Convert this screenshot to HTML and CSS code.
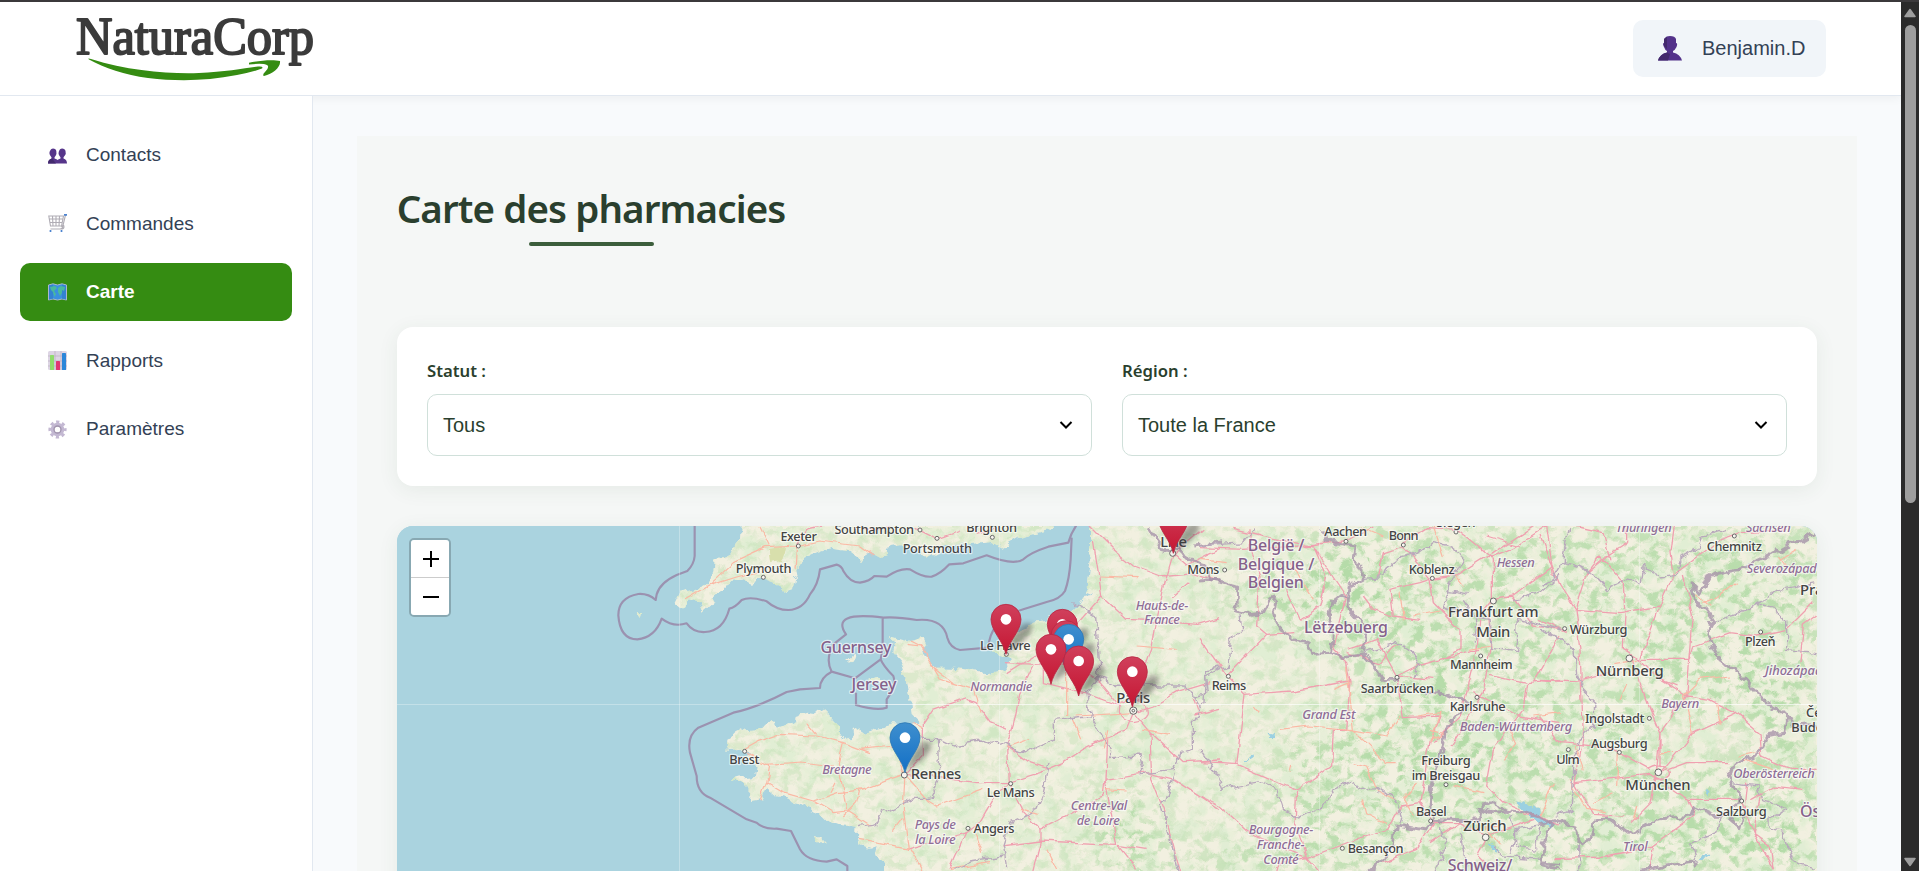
FILE: index.html
```html
<!DOCTYPE html>
<html lang="fr">
<head>
<meta charset="utf-8">
<title>NaturaCorp - Carte des pharmacies</title>
<link rel="stylesheet" href="styles.css">
</head>
<body>
<div class="window">
  <div class="app">
    <header class="header">
      <svg class="logo" viewBox="0 0 240 66" aria-label="NaturaCorp">
        <text class="logo-text" x="1" y="38" textLength="238" lengthAdjust="spacingAndGlyphs">NaturaCorp</text>
        <path transform="translate(2 0)" fill="#358c12" d="M12 43.500Q10 42 14 43C52 55 92 58 122 57C148 56 168 52 181 50.500Q187 50 185 52.500Q176 56 160 59C129 65 101 65.500 71 62C48 59 27 52 12 43.500ZM172 46.800C182 44.500 196 43.500 203 45C204 51 196 58 187 60Q185 59 188 56Q193 51 190 49Q186 47 172 48.500Z"/>
      </svg>
      <div class="user">
        <svg class="user-icon" viewBox="0 0 24 25"><path d="M7 2Q8 0 12 0Q17 0 18 3V7Q20 7 18.500 11Q17 14 15 15V16.500Q22 18 24 24.500H0Q2 18 9 16.500V15Q7 14 6 11Q4 7 6 7V3Z" fill="#53328a"/><path d="M0 24.500Q2 18 9 16.500L12 18L10 24.500ZM6 3L9 1V13L6 10Z" fill="#43296c"/></svg>
        <span>Benjamin.D</span>
      </div>
    </header>
    <div class="body">
      <nav class="sidebar">
        <a class="nav"><svg viewBox="0 0 19 19"><g fill="#56358a"><path d="M2.500 4Q3 2.500 5 2.500Q8 2.500 8.300 5Q9 8 7.500 10Q5 13 2.500 10Q1 8 1.500 6ZM11.500 4Q12 2.500 14 2.500Q17 2.500 17.500 5Q18.500 8 16.500 10Q14 13 11.500 10Q10 8 10.700 6Z"/><path d="M0 17.500Q0 13.500 3.500 12.500V10H6.500V12.500Q9 13 9.500 14Q10.500 13 12.500 12.500V10H15.500V12.500Q19 13.500 19 17.500Z"/></g><path d="M0 17.500Q0 13.500 4 12.500L8 17.500Z" fill="#432a6e"/></svg><span>Contacts</span></a>
        <a class="nav"><svg viewBox="0 0 19 19" fill="none"><path d="M.8 2H15.500L13.500 12H2.500ZM1 5H15M1.500 8.500H14.500M4.500 2L5 12M8 2V12M11.500 2L11 12M17.500 1L14.500 13.500Q14 15 12 15H2.500M13.500 13Q16 9.500 16 13Q16 15 13 15" stroke="#b0adb5" stroke-width="1.100"/><path d="M16 .8H19M2.500 16V18M13.500 16V18" stroke="#4c83cf" stroke-width="1.700"/></svg><span>Commandes</span></a>
        <a class="nav active"><svg viewBox="0 0 19 19"><path d="M.5 2L5 .8L9.500 2L14 .8L18.500 2V17L14 16L9.500 17L5 16L.5 17Z" fill="#3a90df" stroke="#a9b7cd"/><path d="M14 1.500V16L18 16.500V2.500ZM5 1.500V16L1 16.500V2.500Z" fill="#2f7bc9" opacity=".65"/><path d="M2 4L7 3L9 5L6 8L8 11L6.500 14L5 9L3 7ZM10 5L13 3L17 4L16 8L14 7V10L12 13L10 9Z" fill="#49b99d"/></svg><span>Carte</span></a>
        <a class="nav"><svg viewBox="0 0 19 19"><rect width="19" height="19" rx="1.500" fill="#ddd5e4"/><path d="M0 5H19M0 10H19M0 15H19M7 0V19M13 0V19" stroke="#b9afc0" stroke-width=".7"/><rect x="2" y="4" width="4" height="15" rx=".6" fill="#8fdc6b"/><rect x="8" y="10" width="4" height="9" rx=".6" fill="#e23472"/><rect x="14" y="2" width="4" height="17" rx=".6" fill="#2b86d9"/></svg><span>Rapports</span></a>
        <a class="nav"><svg viewBox="0 0 19 19" fill="none"><circle cx="9.500" cy="9.500" r="7.600" stroke="#c3b8d2" stroke-width="3" stroke-dasharray="3.200 2.770" stroke-dashoffset="1.600"/><circle cx="9.500" cy="9.500" r="4.900" stroke="#c3b8d2" stroke-width="3.800"/><circle cx="9.500" cy="9.500" r="3.500" stroke="#a194ad" stroke-width="1.300"/></svg><span>Paramètres</span></a>
      </nav>
      <main class="content">
        <section class="panel">
          <div class="title-wrap"><h1>Carte des pharmacies</h1><div class="title-line"></div></div>
          <div class="filters">
            <div class="field"><label>Statut :</label><div class="select"><span>Tous</span><svg viewBox="0 0 14 8"><path d="M1.500 1L7 6.500L12.500 1"/></svg></div></div>
            <div class="field"><label>Région :</label><div class="select"><span>Toute la France</span><svg viewBox="0 0 14 8"><path d="M1.500 1L7 6.500L12.500 1"/></svg></div></div>
          </div>
          <div class="map">
            <svg class="map-canvas" viewBox="397 525 1420 346">
              <defs>
                <clipPath id="land">
                  <path transform="translate(390 515) scale(.33333)" d="M1052 20L1050 70L1020 115L975 140L965 185L930 215L870 230L855 262L865 272L885 266L895 250L930 262L940 290L962 270L975 240L1000 222L1020 195L1060 190L1085 200L1120 190L1160 205L1190 225L1206 220L1212 190L1228 180L1225 155L1240 120L1290 100L1330 92L1370 100L1404 125L1412 142L1420 120L1445 112L1470 125L1495 120L1490 95L1530 88L1580 95L1610 128L1640 110L1660 88L1740 85L1810 78L1840 95L1890 65L1970 45L2005 20Z"/>
                  <path transform="translate(860 515) scale(.33333)" d="M690 20V70L692 130L682 190L680 225L706 236L670 240L650 270L610 290L560 315L520 320L460 350L430 375L395 405L420 420L455 430L430 460L380 472L330 462L280 455L225 455L200 430L190 400L205 385L195 365L150 375L90 360L105 385L100 410L125 440L140 490L150 540L155 600L180 625L150 630L100 625L40 640L20 655L-5 638L-40 675L-60 650L-80 610L-110 580L-130 595L-160 590L-190 600L-192 615L-240 635L-265 612L-290 635L-350 640L-395 665L-398 705L-350 700L-325 715L-360 725L-310 750L-315 780L-360 785L-388 793L-350 805L-325 830L-328 855L-295 850L-280 815L-250 840L-210 850L-160 880L-120 895L-100 915L-70 925L-10 935L-12 960L0 985L30 995L50 990L45 1020L75 1040V1090H2900V20Z"/>
                  <path transform="translate(390 515) scale(.33333)" d="M1375 430L1388 418L1402 414L1396 432L1382 437ZM1272 960L1290 965L1305 982L1278 982ZM1435 488L1468 482L1484 495L1465 507L1440 500ZM746 294L760 294L756 306Z"/>
                </clipPath>
                <filter id="woods" x="0" y="0" width="100%" height="100%" color-interpolation-filters="sRGB">
                  <feTurbulence type="fractalNoise" baseFrequency=".085 .1" numOctaves="4" seed="11" result="n"/>
                  <feColorMatrix in="n" values="0 0 0 0 .7  0 0 0 0 .855  0 0 0 0 .65  4.500 0 0 0 -2.050"/>
                  <feGaussianBlur stdDeviation=".5"/>
                </filter>
                <filter id="fields" x="0" y="0" width="100%" height="100%" color-interpolation-filters="sRGB">
                  <feTurbulence type="fractalNoise" baseFrequency=".05" numOctaves="4" seed="4"/>
                  <feColorMatrix values="0 0 0 0 .86  0 0 0 0 .93  0 0 0 0 .81  4 0 0 0 -1.700"/>
                </filter>
                <filter id="soft" x="-20%" y="-20%" width="140%" height="140%"><feGaussianBlur stdDeviation="16"/></filter>
                <filter id="rough" filterUnits="userSpaceOnUse" x="397" y="520" width="1420" height="355" color-interpolation-filters="sRGB">
                  <feTurbulence type="fractalNoise" baseFrequency=".09" numOctaves="3" seed="8"/>
                  <feDisplacementMap in="SourceGraphic" scale="10" xChannelSelector="R" yChannelSelector="G"/>
                </filter>
                <filter id="wavy" filterUnits="userSpaceOnUse" x="397" y="520" width="1420" height="355" color-interpolation-filters="sRGB">
                  <feTurbulence type="fractalNoise" baseFrequency=".06" numOctaves="2" seed="3"/>
                  <feDisplacementMap in="SourceGraphic" scale="7" xChannelSelector="R" yChannelSelector="G"/>
                </filter>
                <filter id="shade" x="-50%" y="-50%" width="200%" height="200%"><feGaussianBlur stdDeviation="8"/></filter>
                <mask id="density" maskUnits="userSpaceOnUse" x="397" y="525" width="1420" height="346">
                  <rect x="397" y="525" width="1420" height="346" fill="#555"/>
                  <g fill="#fff" filter="url(#soft)">
                    <path d="M1260 560L1330 530H1817V871H1120L1110 820L1200 860L1310 800L1260 790L1290 740L1380 690L1330 640L1220 610Z" opacity=".75"/>
                    <ellipse cx="1395" cy="755" rx="28" ry="50"/><ellipse cx="1470" cy="745" rx="25" ry="50"/><ellipse cx="1120" cy="825" rx="30" ry="35"/>
                    <path d="M1700 600L1800 710L1780 735L1700 650ZM1650 560L1750 550L1720 580ZM1500 830L1650 840L1817 800V871H1500Z"/>
                    <ellipse cx="1350" cy="600" rx="60" ry="45"/><ellipse cx="1450" cy="670" rx="35" ry="25"/>
                  </g>
                  <g fill="#333" filter="url(#soft)"><ellipse cx="1700" cy="740" rx="60" ry="18"/><ellipse cx="1590" cy="670" rx="25" ry="30"/></g>
                </mask>
                <linearGradient id="red" x2="0" y2="1"><stop stop-color="#d0405c"/><stop offset="1" stop-color="#c51632"/></linearGradient>
                <linearGradient id="blue" x2="0" y2="1"><stop stop-color="#3f8fce"/><stop offset="1" stop-color="#126fc6"/></linearGradient>
                <g id="shadow"><path d="M0 104L22 50Q50 0 76 14Q88 40 40 75Z" fill="#333" opacity=".42" filter="url(#shade)"/></g>
                <path id="pin" d="M0 105C-8 65-45 35-45 0A45 45 0 0 1 45 0C45 35 8 65 0 105Z"/>
              </defs>

              <rect x="397" y="525" width="1420" height="346" fill="#aad3df"/>
              <g filter="url(#rough)"><g clip-path="url(#land)">
                <rect x="380" y="515" width="1450" height="370" fill="#f2f0e0"/>
                <rect x="397" y="525" width="1420" height="346" filter="url(#fields)" opacity=".7"/>
                <g mask="url(#density)"><rect x="397" y="525" width="1420" height="346" filter="url(#woods)"/></g>
                <path d="M768 548L785 545L782 560L770 562Z" fill="#d8dfac"/>
                <path d="M1515 800L1530 803L1553 825L1538 823ZM1540 818L1555 822L1552 830ZM1706 790L1710 790L1709 795ZM1268 731L1275 733L1272 736ZM1245 759L1254 754L1250 757ZM1700 858L1710 854L1704 861ZM1488 843L1500 850L1496 851Z" fill="#9bd0e2" stroke="#9bd0e2"/>
              </g></g>

              <!-- Motorways -->
              <g class="road" filter="url(#wavy)">
                <g transform="translate(390 515) scale(.33333)">
                  <path class="trunk" d="M885 248L960 205L1040 180L1110 165M960 205L1030 140L1130 95L1220 90L1290 75L1410 90M1110 30L1140 90M1220 90L1215 160M1410 90L1450 120M1065 700L1100 680L1170 655L1280 660L1360 680L1440 710M1065 705L1130 745L1235 738L1330 750M1140 745L1130 800L1180 830L1270 855L1340 830L1430 820M1130 800L1110 850M1270 855L1330 890L1370 885L1440 930M1250 620L1280 655M1360 680L1345 740L1370 885M1410 820L1400 860L1360 900M1320 830L1335 800"/>
                  <path class="motor" d="M1225 85L1250 40L1290 30"/>
                </g>
                <g transform="translate(860 515) scale(.33333)">
                  <path class="motor" d="M0 35L50 45L90 30M170 40L230 70L300 45M350 55L400 40M700 75L715 170L725 240L800 310L890 315L1010 325L1080 305M725 240L610 370L520 420L440 470M440 440L520 445L640 440L720 500L780 570M690 30L760 100L820 150L900 180L1000 170L1060 190M940 115L915 200L890 310L875 400L840 500L820 570M940 115L1030 40M940 115L980 150L1080 100M940 240L985 200M820 590L880 570L950 530L1050 500M820 590L870 650L970 740L1080 735M820 590L800 640L730 670L670 700L610 740L540 770L440 800L350 800L240 785L135 775M740 670L735 790L730 840L540 940L490 890L445 800L440 690L460 630L480 530L520 445M440 640L390 620L345 560L320 550M135 775L190 715L190 625L220 580L320 545M445 690L510 740L570 760M445 800L400 850L360 920L320 950L270 1060M430 990L540 975L770 985L860 1000M540 940L540 980L515 1080M770 985L735 790L860 770L940 790L1080 880M870 650L875 790L910 880L965 1080M770 985L830 1060M1000 600L1080 580M780 560Q820 540 860 570Q880 610 820 620Q760 610 780 560M550 390L550 500L670 530L780 570M320 950L140 1000M1015 590L1000 545"/>
                  <path class="trunk" d="M140 385L180 390L240 490L340 520L360 590M180 390L150 375M220 455L280 500M0 825L90 790L135 775L100 690L0 700M135 775L130 880L145 1000L0 970M135 775L205 855L230 870L370 820M150 1000L190 1070M155 620L190 640M720 180L830 185M830 390L950 400M650 600L820 590M620 440L620 600M640 610L665 670M730 820L800 825M440 690L510 665M345 950L365 1010M390 1040L270 1060M480 880L530 895M560 1000L590 1060M100 950L130 910M850 640L930 655M740 640L730 700"/>
                </g>
                <g transform="translate(1200 515) scale(.33333)">
                  <path class="motor" d="M0 95L130 100L300 90L435 75L520 30M150 40V100L180 180L170 330L200 355L280 350M100 40L180 60L340 90L440 240M340 90L380 180L360 270L300 310L260 220M200 355L80 480L0 370M80 480L135 535L280 525L450 495L440 640L400 640L395 750L290 825L110 745L0 740M135 535L110 745M290 825L285 920L320 1025L450 975L560 940L600 870L660 860L690 680L720 600L610 605L590 480L650 450L720 430L840 400M0 840L60 870L160 960L320 1025L370 1080M450 495L440 440L400 400L440 240M440 400L530 370L590 480L700 490M590 380L540 440L440 410M490 240L520 280L580 300L660 310M580 300L570 220L660 200L690 190L700 260L780 340L780 400L730 430M535 180L550 110L610 90L690 190L770 180L880 110L1000 30M610 80L680 35L770 40L880 130L880 250L940 240L1060 150M880 250L840 300L830 410L800 530L780 600L700 680M860 300L870 400L850 530L750 690M870 475L980 500L1080 490M980 500L970 580L880 700L860 810L910 860L1080 930M820 530L960 600L1080 620M935 240L1000 330L1080 340M870 125L940 95L1040 30L1060 180M860 60L960 90M660 860L700 920L780 920L860 960L1000 910M700 920L650 1000L550 1040M860 960L830 1020L870 1060M1080 360L1040 430L1000 500M230 1080L240 1040L320 1025M780 920L690 980"/>
                  <path class="trunk" d="M440 450L460 640L560 740L590 740M240 640L330 630L450 640L560 660L600 600M460 740L500 750L530 820L590 850M160 570L175 590M270 770L275 750M400 520L450 500M490 850L500 890L560 920M640 300L720 285M650 600L720 590L690 680M690 640L740 650L690 670M0 130L80 140M270 140L340 250M600 230L610 310M750 160L790 210M700 30L730 120M810 400L870 390M1000 600L1080 590M920 620L950 680L910 730M860 940L900 990M760 810L850 830M830 940L900 930M480 30L550 60M640 900L610 850L650 800"/>
                </g>
                <g transform="translate(1540 515) scale(.33333)">
                  <path class="motor" d="M0 60L35 150L60 210L105 280L120 400L125 530L130 660L105 800L160 895L250 900M105 280L140 170L200 120L260 80M105 280L240 290L360 270L400 180L390 110L400 30M140 170L180 120L250 200L255 300L250 400L300 430L360 270M300 430L450 430L460 390L570 350L650 360L740 340L820 260M395 180L450 140L540 70M430 180L460 300L440 540L360 650L350 760L330 860L270 920M270 410L330 580L360 650V750M440 540L510 550L590 590L660 650L665 720L750 760H830M360 490L440 540M300 430L360 490L410 510M590 590L460 650L420 700L360 770L440 740L570 740M0 600L60 680L210 695L330 760M105 800L330 775L440 850L600 850L640 950L700 1060M630 850L700 810L790 820M440 850L460 900L340 990L200 1020L40 1025M320 760Q360 730 390 770Q400 800 340 790M0 490L120 495L210 470M780 440L790 330L830 300M0 310L80 350M540 70L600 50L740 45M210 130L190 50L100 30M260 30V80M340 990L330 1060M620 800L610 900M700 1060L690 990L640 950L660 840"/>
                  <path class="trunk" d="M490 260L540 240L590 200M715 120L760 180M430 540L480 490L570 480M430 540L460 650M530 560L540 620M700 760L610 730M105 690L130 760M260 500L240 550M235 710L230 810M290 870L280 910M90 790L140 880L200 890M0 900L40 800M220 440L290 430M600 720L650 710M160 860L220 830M460 230L510 270M770 100L720 130M360 710H400"/>
                </g>
              </g>

              <!-- Borders and territorial waters -->
              <g class="sea-border">
                <path transform="translate(390 515) scale(.33333)" d="M914 20V120Q912 145 892 165L860 177Q810 200 800 235L797 252Q775 232 745 234Q685 245 685 298Q690 370 742 370Q795 365 815 308Q850 335 890 322Q910 350 945 348Q1000 345 1018 278Q1035 275 1055 252Q1080 240 1130 256Q1160 282 1195 282Q1240 280 1260 235Q1285 205 1290 160L1340 146Q1355 150 1360 165Q1380 200 1410 200Q1440 195 1453 180L1490 182Q1530 155 1560 160Q1600 185 1625 182Q1650 175 1678 145L1720 142L1790 118Q1870 150 1900 130Q1920 110 1975 92L2035 80Q2045 45 2065 20M1325 467Q1290 485 1290 516L1230 520L1190 528Q1100 575 1030 590Q960 620 925 635Q890 660 900 710L920 780Q920 830 960 845L1070 910L1100 920Q1120 940 1160 938L1203 945L1230 1000Q1250 1035 1310 1037L1340 1030L1372 1050V1080"/>
                <path transform="translate(860 515) scale(.33333)" d="M635 65L632 130Q628 190 615 225Q600 250 560 258L490 280Q390 310 385 395L300 402Q270 395 262 365Q250 305 170 312Q110 302 70 305Q-90 285 -42 355L-80 385Q-105 430 -85 467L-15 487L62 430Q70 450 100 480Q110 510 80 550V575Q50 585 -12 567V530M68 305V400L62 430"/>
              </g>
              <g class="border" filter="url(#rough)">
                <g transform="translate(860 515) scale(.33333)">
                  <path d="M640 260L710 300L720 480L680 530L690 600L745 690L750 725L840 720L850 770L940 760L960 710L1000 700L1000 620L1020 600L1000 530L970 510L780 510L720 485M685 600L580 610L580 670L500 710L430 680L400 685L360 675L280 690L240 670L190 670L160 640M235 670L240 780L210 850L160 850L70 890L50 925L0 935M570 740L550 830L530 880L450 920L430 980L440 1060M940 770L910 870L920 930L960 1080M430 1020L330 1035L280 1060M1080 460L1040 480L1045 530L1000 540"/>
                  <path class="country" d="M865 30L890 70L910 100L960 100L980 130L1030 145L1050 190L1080 195M1000 90L1080 80"/>
                </g>
                <g transform="translate(1200 515) scale(.33333)">
                  <path class="country" d="M0 195L30 190L60 195L110 210L108 285L150 295L190 290L215 245L230 240L220 290L235 340L280 365L320 380L335 410L395 405L430 425L490 415L520 450L545 490L600 490M395 405L400 350L385 300L395 260L425 235L445 240L450 210L490 190L485 160L460 130L465 90L375 75L370 40M445 240L445 275L500 340L485 410M670 525L740 535L805 560L740 630L720 720L695 810L690 880L700 910L800 915L835 915L840 875L880 860L930 885L980 890L1040 910L1060 930L1030 980L1025 1040L1080 1045M700 920L680 945L590 930L580 980L560 1020L500 1070M840 880L870 890L930 885"/>
                  <path d="M120 295L125 340L90 380L85 450L20 465L15 560L0 570M490 190L550 185L560 155L600 125L660 110L700 80L750 90L790 120L760 180L735 270L800 300L870 310L880 400L950 410L955 310L1080 345M0 700L50 780L65 820L180 800L230 820L250 880L300 905L370 870L400 820L450 800L490 820L530 815L590 860L605 900L600 925M640 480L660 450L640 410L590 380L490 410M790 250L830 310L820 380M940 250L1020 230L1080 180M930 900L950 960L930 1010M720 930L740 1000L700 1080M880 990L910 1020L1020 1030M0 90L130 80L160 40M800 230L745 220M780 950L800 1060M950 940L1020 930L1010 1000L950 990Z"/>
                </g>
                <g transform="translate(1540 515) scale(.33333)">
                  <path class="country" d="M830 45L790 70L750 80L700 110L640 140L600 160L530 175L500 190L480 235L450 200L460 250L500 280L520 310L500 350L540 430L590 465L630 510L680 560L740 600L735 650L680 660L660 710L600 740L560 770L580 810L605 850L580 870L570 910L600 935L610 890M560 895L520 895L465 870L455 900L350 910L270 955L210 910L165 910L160 960L125 985L100 930L50 910L0 930M0 1045L60 1060M285 1068L340 1055L460 1035L470 1060M740 600L760 630L830 625"/>
                  <path d="M90 30L70 110L70 140L110 150L160 175L200 220L260 190L300 205L310 150L360 180L410 175L420 130L480 95L490 60L560 40M70 140L40 190L0 210M0 340L60 365L105 405L110 480L125 520L165 560L160 630L130 660L105 720L100 880L50 900M520 310L600 290L650 265L700 280L740 310L740 400L830 410M650 265L720 220L830 200M580 800L650 810L660 850L700 860L740 880L690 900L690 940L730 950L760 1040L830 1060M540 900L530 950L450 985L470 1040M115 985L120 1068"/>
                </g>
              </g>

              <!-- Tile seams -->
              <path d="M679.500 525V871M999.500 525V871M1319.500 525V871M1639.500 525V871M397 703.500H1817" stroke="#fff" stroke-opacity=".3"/>
              <path d="M860 703.500H1817" stroke="#fff" stroke-opacity=".5"/>

              <!-- Towns -->
              <g class="town">
                <g transform="translate(390 515) scale(.33333)"><circle cx="1225" cy="90" r="6"/><circle cx="1120" cy="184" r="6"/><circle cx="1064" cy="706" r="6"/></g>
                <g transform="translate(860 515) scale(.33333)"><circle cx="180" cy="42" r="6"/><circle cx="231" cy="67" r="6"/><circle cx="397" cy="64" r="6"/><circle cx="439" cy="415" r="6"/><circle cx="133" cy="777" r="9"/><circle cx="452" cy="803" r="6"/><circle cx="324" cy="937" r="6"/><circle cx="938" cy="112" r="9"/><circle cx="820" cy="584" r="11"/><circle cx="820" cy="584" r="4"/></g>
                <g transform="translate(1200 515) scale(.33333)"><circle cx="74" cy="162" r="6"/><circle cx="438" cy="76" r="6"/><circle cx="610" cy="87" r="6"/><circle cx="768" cy="48" r="6"/><circle cx="697" cy="187" r="6"/><circle cx="880" cy="255" r="9"/><circle cx="842" cy="420" r="6"/><circle cx="591" cy="484" r="6"/><circle cx="831" cy="544" r="6"/><circle cx="85" cy="481" r="6"/><circle cx="738" cy="806" r="6"/><circle cx="692" cy="915" r="6"/><circle cx="857" cy="964" r="10"/><circle cx="427" cy="997" r="6"/></g>
                <g transform="translate(1540 515) scale(.33333)"><circle cx="583" cy="60" r="6"/><circle cx="74" cy="338" r="6"/><circle cx="268" cy="427" r="10"/><circle cx="662" cy="348" r="6"/><circle cx="328" cy="607" r="6"/><circle cx="85" cy="701" r="6"/><circle cx="238" cy="709" r="6"/><circle cx="355" cy="769" r="10"/><circle cx="605" cy="855" r="6"/></g>
              </g>

              <!-- Place names -->
              <g class="names">
                <g transform="translate(390 515) scale(.33333)">
                  <text x="1226" y="75" textLength="109">Exeter</text><text x="1121" y="170" textLength="167">Plymouth</text><text x="1453" y="55" textLength="239">Southampton</text><text x="1063" y="745" textLength="90">Brest</text>
                  <text class="nation" x="1398" y="412" textLength="213">Guernsey</text><text class="nation" x="1452" y="523" textLength="135">Jersey</text><text class="region" x="1371" y="775" textLength="148">Bretagne</text>
                </g>
                <g transform="translate(860 515) scale(.33333)">
                  <text x="232" y="111" textLength="208">Portsmouth</text><text x="395" y="48" textLength="152">Brighton</text><text x="436" y="402" textLength="152">Le Havre</text><text x="452" y="843" textLength="144">Le Mans</text><text x="402" y="951" textLength="123">Angers</text><text x="1030" y="175" textLength="96">Mons</text>
                  <text class="city" x="228" y="789" textLength="152">Rennes</text><text class="city" x="820" y="560" textLength="102">Paris</text><text class="city" x="941" y="93" textLength="80">Lille</text>
                  <g class="region"><text x="424" y="524" textLength="186">Normandie</text><text x="226" y="940" textLength="124">Pays de</text><text x="226" y="985" textLength="122">la Loire</text><text x="717" y="881" textLength="170">Centre-Val</text><text x="715" y="926" textLength="130">de Loire</text><text x="906" y="281" textLength="158">Hauts-de-</text><text x="906" y="325" textLength="108">France</text></g>
                </g>
                <g transform="translate(1200 515) scale(.33333)">
                  <text x="437" y="60" textLength="128">Aachen</text><text x="611" y="71" textLength="90">Bonn</text><text x="768" y="34" textLength="118">Siegen</text><text x="695" y="174" textLength="138">Koblenz</text><text x="844" y="460" textLength="188">Mannheim</text><text x="592" y="530" textLength="220">Saarbrücken</text><text x="833" y="586" textLength="168">Karlsruhe</text><text x="87" y="521" textLength="104">Reims</text><text x="738" y="746" textLength="148">Freiburg</text><text x="738" y="791" textLength="206">im Breisgau</text><text x="694" y="901" textLength="92">Basel</text><text x="527" y="1011" textLength="168">Besançon</text>
                  <g class="city"><text x="880" y="304" textLength="272">Frankfurt am</text><text x="880" y="362" textLength="102">Main</text><text x="855" y="944" textLength="130">Zürich</text></g>
                  <g class="nation"><text x="228" y="105" textLength="170">België /</text><text x="228" y="161" textLength="230">Belgique /</text><text x="227" y="217" textLength="168">Belgien</text><text x="438" y="350" textLength="252">Lëtzebuerg</text><text x="840" y="1064" textLength="194">Schweiz/</text></g>
                  <g class="region"><text x="947" y="152" textLength="114">Hessen</text><text x="948" y="645" textLength="337">Baden-Württemberg</text><text x="387" y="609" textLength="160">Grand Est</text><text x="243" y="953" textLength="194">Bourgogne-</text><text x="242" y="998" textLength="144">Franche-</text><text x="243" y="1043" textLength="106">Comté</text></g>
                </g>
                <g transform="translate(1540 515) scale(.33333)">
                  <text x="583" y="105" textLength="166">Chemnitz</text><text x="176" y="354" textLength="173">Würzburg</text><text x="661" y="391" textLength="92">Plzeň</text><text x="224" y="622" textLength="178">Ingolstadt</text><text x="238" y="695" textLength="170">Augsburg</text><text x="84" y="745" textLength="70">Ulm</text><text x="604" y="899" textLength="152">Salzburg</text><text class="start" x="798" y="604">České</text><text class="start" x="754" y="648">Budějovice</text>
                  <g class="city"><text x="269" y="481" textLength="204">Nürnberg</text><text x="354" y="822" textLength="196">München</text><text class="start" x="780" y="237">Praha</text></g>
                  <text class="nation start" x="780" y="903">Österreich</text>
                  <g class="region"><text x="311" y="48" textLength="168">Thüringen</text><text x="685" y="48" textLength="134">Sachsen</text><text class="start" x="620" y="170" textLength="210">Severozápad</text><text class="start" x="675" y="476">Jihozápad</text><text x="421" y="576" textLength="114">Bayern</text><text x="702" y="787" textLength="244">Oberösterreich</text><text x="286" y="1005" textLength="74">Tirol</text></g>
                </g>
              </g>

              <!-- Pharmacy markers -->
              <g transform="translate(860 515) scale(.33333)">
                <use href="#shadow" x="940" y="7"/><use href="#shadow" x="438" y="310"/><use href="#shadow" x="607" y="325"/><use href="#shadow" x="626" y="370"/><use href="#shadow" x="573" y="400"/><use href="#shadow" x="656" y="435"/><use href="#shadow" x="817" y="467"/><use href="#shadow" x="135" y="665"/>
                <g fill="url(#red)" stroke="#b82843" stroke-width="2.500"><use href="#pin" x="940" y="7"/><use href="#pin" x="438" y="310"/><use href="#pin" x="607" y="325"/></g>
                <g fill="#fff"><circle cx="438" cy="310" r="16"/><circle cx="607" cy="325" r="16"/></g>
                <use href="#pin" x="618" y="359" fill="url(#red)" stroke="#b82843" stroke-width="2.500"/>
                <use href="#pin" x="626" y="370" fill="url(#blue)" stroke="#2f7ab5" stroke-width="2.500"/><circle cx="626" cy="370" r="16" fill="#fff"/>
                <g fill="url(#red)" stroke="#b82843" stroke-width="2.500"><use href="#pin" x="573" y="400"/><use href="#pin" x="656" y="435"/><use href="#pin" x="817" y="467"/></g>
                <use href="#pin" x="135" y="665" fill="url(#blue)" stroke="#2f7ab5" stroke-width="2.500"/>
                <g fill="#fff"><circle cx="573" cy="400" r="16"/><circle cx="656" cy="435" r="16"/><circle cx="817" cy="467" r="16"/><circle cx="135" cy="665" r="16"/></g>
              </g>
            </svg>
            <div class="zoom"><button class="zoom-btn" aria-label="Zoom avant"><svg viewBox="0 0 16 16"><path d="M0 8H16M8 0V16"/></svg></button><button class="zoom-btn" aria-label="Zoom arrière"><svg viewBox="0 0 16 16"><path d="M0 8H16"/></svg></button></div>
          </div>
        </section>
      </main>
    </div>
  </div>
  <div class="scrollbar">
    <svg viewBox="0 0 12 10"><path d="M6 1.500L11 8.500H1Z"/></svg>
    <div class="thumb"></div>
    <svg class="down" viewBox="0 0 12 10"><path d="M6 8.500L11 1.500H1Z"/></svg>
  </div>
</div>
</body>
</html>
```

FILE: styles.css
```css
* { box-sizing: border-box; }
body { margin: 0; overflow: hidden; font-family: "Liberation Sans", Arial, sans-serif; color: #334155; }
.window { height: 871px; border-top: 2px solid #3c3a3c; display: grid; grid-template-columns: 1fr 18px; }
.app { display: flex; flex-direction: column; min-width: 0; height: 869px; }
.header { position: relative; z-index: 1; flex: none; height: 94px; padding: 0 75px; display: flex; align-items: center; justify-content: space-between; background: #fff; border-bottom: 1px solid #e2e8f0; box-shadow: 0 2px 10px rgba(0, 0, 0, .05); }
.logo { width: 240px; height: 66px; margin-top: 1px; overflow: visible; }
.logo-text { font: 53px "Liberation Serif", serif; fill: #3b3b3b; stroke: #3b3b3b; stroke-width: 2; stroke-linejoin: round; }
.user { display: flex; align-items: center; gap: 20px; height: 57px; width: 193px; padding-left: 25px; border-radius: 10px; background: #f1f5f9; font-size: 20px; }
.user-icon { width: 24px; height: 25px; }
.body { flex: 1; min-height: 0; display: flex; }
.sidebar { position: relative; z-index: 2; flex: none; width: 313px; padding: 30px 20px; display: flex; flex-direction: column; gap: 10.5px; background: #fff; border-right: 1px solid #e2e8f0; }
.nav { height: 58px; padding-left: 28px; border-radius: 10px; display: flex; align-items: center; gap: 19px; font-size: 19px; }
.nav svg { width: 19px; height: 19px; }
.active { background: #358c12; color: #fff; font-weight: bold; }
.content { flex: 1; min-width: 0; padding: 40px 44px 0; background: #f8fafc; overflow: hidden; }
.panel { height: 900px; padding: 40px; background: #f5f7f6; }
.title-wrap { width: 388px; height: 150px; display: flex; flex-direction: column; align-items: center; }
.filters { margin-top: 0; }
h1 { margin: 0; height: 66px; line-height: 64px; white-space: nowrap; font-family: "Noto Sans", "Open Sans", sans-serif; font-size: 38.5px; letter-spacing: -.9px; font-weight: 600; color: #2a3f2e; }
.title-line { width: 125px; height: 4px; border-radius: 2px; background: #3c5e3c; }
.filters { height: 159px; padding: 30px; display: grid; grid-template-columns: 1fr 1fr; gap: 30px; background: #fff; border-radius: 16px; box-shadow: 0 4px 20px rgba(45, 90, 55, .08); }
.field { display: flex; flex-direction: column; gap: 10px; }
label { height: 27px; line-height: 27px; font-family: "Noto Sans", "Open Sans", sans-serif; font-size: 16.7px; font-weight: 600; color: #2a3f2e; }
.select { height: 62px; padding: 0 18px 0 15px; display: flex; align-items: center; justify-content: space-between; border: 1px solid #d0e0da; border-radius: 10px; font-size: 20px; color: #2a3f2e; }
.select svg { width: 14px; height: 8px; fill: none; stroke: #000; stroke-width: 2; }
.map { position: relative; height: 500px; margin-top: 40px; border-radius: 16px 16px 0 0; overflow: hidden; background: #aad3df; box-shadow: 0 4px 20px rgba(45, 90, 55, .08); }
.title-wrap { height: 151px; }
.map-canvas { display: block; width: 1420px; height: 346px; }
.zoom { position: absolute; left: 12px; top: 12px; width: 42px; height: 79px; border: 2px solid rgba(0, 0, 0, .2); border-radius: 5px; background-clip: padding-box; overflow: hidden; display: flex; flex-direction: column; }
.zoom-btn { flex: 1; padding: 0; border: 0; background: #fff; display: flex; align-items: center; justify-content: center; }
.zoom-btn + .zoom-btn { border-top: 1px solid #ccc; }
.zoom-btn svg { width: 16px; height: 16px; margin-left: 2px; fill: none; stroke: #000; stroke-width: 2; }
.road path { fill: none; stroke-linejoin: round; }
.road .motor { stroke: #f0a0b0; stroke-width: 3.9; }
.road .trunk { stroke: #fbb8a4; stroke-width: 3.6; }
.sea-border { fill: none; stroke: #9b92b0; stroke-width: 6.5; stroke-linejoin: round; }
.border { fill: none; stroke: #b9a9bc; stroke-width: 4.2; stroke-linejoin: round; }
.border .country { stroke: #a794aa; stroke-width: 8.5; stroke-opacity: .8; }
.town circle { fill: #f7f5f0; stroke: #666; stroke-width: 3; }
.names text { text-anchor: middle; paint-order: stroke; stroke: rgba(255, 255, 255, .65); stroke-width: 7; stroke-linejoin: round; }
.names { font-family: "Noto Sans", sans-serif; font-size: 38.5px; font-weight: 500; fill: #444; }
.names .start { text-anchor: start; }
.names .city { font-size: 44.5px; }
.names .nation { font-size: 48px; fill: #84608a; }
.names .region { font-style: italic; fill: #8f6e97; }
.scrollbar { background: #2b2b2b; display: flex; flex-direction: column; align-items: center; padding: 6px 0 4px; }
.scrollbar svg { width: 12px; height: 10px; fill: #9e9e9e; stroke: #9e9e9e; stroke-width: 1.5; stroke-linejoin: round; }
.scrollbar .down { margin-top: auto; }
.thumb { width: 11px; height: 478px; margin-top: 7px; border-radius: 6px; background: #9e9e9e; }
```
